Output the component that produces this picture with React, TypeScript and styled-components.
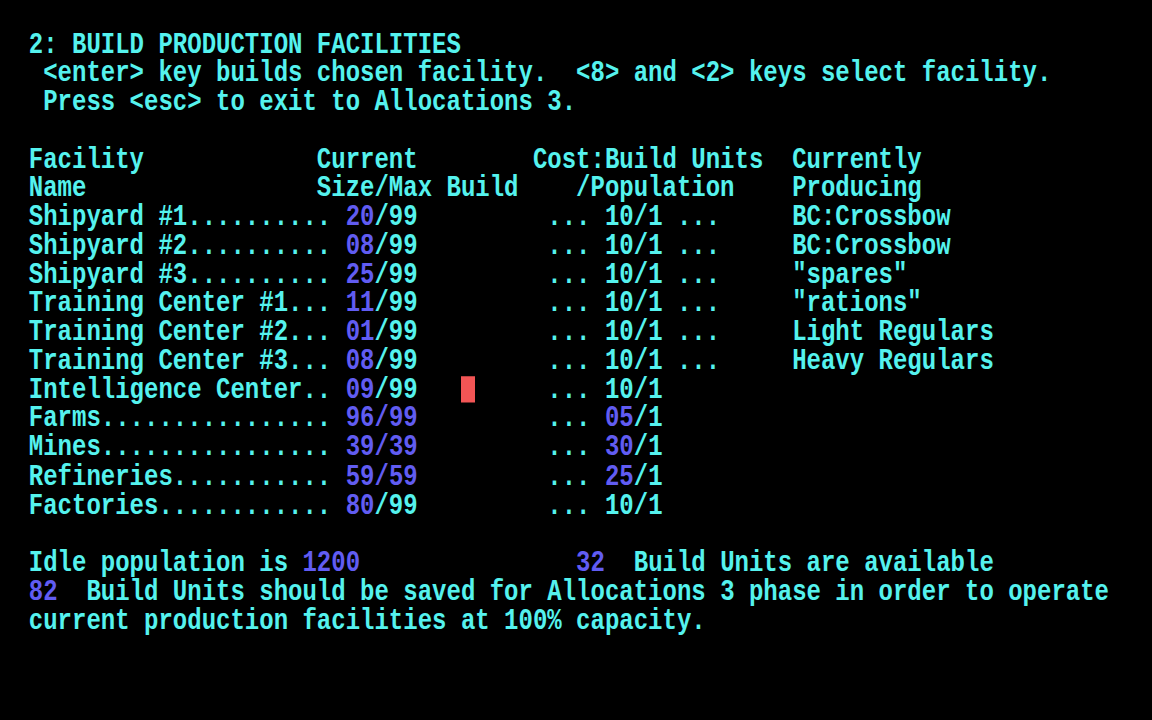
import React from 'react';
import styled, { createGlobalStyle } from 'styled-components';

// Text-mode palette
const CYAN = '#55f2ee';
const BLUE = '#615cf2';
const RED = '#f25555';

// 80x25 cells, 14.4 x 28.8 px each (drawn at 23.04px rows, then stretched 1.25x)
const COLS = 80;

const GlobalStyle = createGlobalStyle`
  html, body {
    margin: 0;
    background: #000;
  }
`;

const Frame = styled.div`
  width: 1152px;
  height: 720px;
  overflow: hidden;
  background: #000;
`;

const Screen = styled.div`
  width: 1152px;
  padding-top: 1px;
  transform: scaleY(1.25);
  transform-origin: top left;
  font-family: 'Liberation Mono', 'DejaVu Sans Mono', monospace;
  font-weight: bold;
  font-size: 24px;
  color: ${CYAN};
`;

const Row = styled.div`
  height: 23.04px;
  line-height: 23.04px;
  white-space: pre;
`;

const Hi = styled.span`
  color: ${BLUE};
`;

const Cursor = styled.span`
  display: inline-block;
  width: 14.4px;
  height: 20.8px;
  margin-top: 1px;
  vertical-align: top;
  background: ${RED};
`;

type Facility = {
  name: string;
  size: string;
  max: string;
  full?: boolean;
  cost: string;
  costHi?: boolean;
  producing?: string;
};

const facilities: Facility[] = [
  { name: 'Shipyard #1', size: '20', max: '99', cost: '10', producing: 'BC:Crossbow' },
  { name: 'Shipyard #2', size: '08', max: '99', cost: '10', producing: 'BC:Crossbow' },
  { name: 'Shipyard #3', size: '25', max: '99', cost: '10', producing: '"spares"' },
  { name: 'Training Center #1', size: '11', max: '99', cost: '10', producing: '"rations"' },
  { name: 'Training Center #2', size: '01', max: '99', cost: '10', producing: 'Light Regulars' },
  { name: 'Training Center #3', size: '08', max: '99', cost: '10', producing: 'Heavy Regulars' },
  { name: 'Intelligence Center', size: '09', max: '99', cost: '10' },
  { name: 'Farms', size: '96', max: '99', full: true, cost: '05', costHi: true },
  { name: 'Mines', size: '39', max: '39', full: true, cost: '30', costHi: true },
  { name: 'Refineries', size: '59', max: '59', full: true, cost: '25', costHi: true },
  { name: 'Factories', size: '80', max: '99', cost: '10' },
];

const CURSOR_ROW = 6;

// Lay out text pieces at fixed columns
const place = (parts: [number, string][]) =>
  parts.reduce((line, [col, text]) => line.padEnd(col, ' ') + text, '').padEnd(COLS, ' ');

const FacilityRow = ({ f, cursor }: { f: Facility; cursor: boolean }) => (
  <Row>
    {'  ' + f.name.padEnd(21, '.') + ' '}
    <Hi>{f.size}</Hi>
    {f.full ? <Hi>/{f.max}</Hi> : '/' + f.max}
    {cursor ? (
      <>
        {'   '}
        <Cursor />
        {'     '}
      </>
    ) : (
      '         '
    )}
    {'... '}
    {f.costHi ? (
      <>
        <Hi>{f.cost}</Hi>/1
      </>
    ) : (
      f.cost + '/1'
    )}
    {f.producing ? ' ...     ' + f.producing : ''}
  </Row>
);

const Blank = () => <Row> </Row>;

const App = () => (
  <>
    <GlobalStyle />
    <Frame>
      <Screen>
        <Blank />
        <Row>{'  2: BUILD PRODUCTION FACILITIES'}</Row>
        <Row>{'   <enter> key builds chosen facility.  <8> and <2> keys select facility.'}</Row>
        <Row>{'   Press <esc> to exit to Allocations 3.'}</Row>
        <Blank />
        <Row>{place([[2, 'Facility'], [22, 'Current'], [37, 'Cost:Build Units'], [55, 'Currently']])}</Row>
        <Row>{place([[2, 'Name'], [22, 'Size/Max Build'], [40, '/Population'], [55, 'Producing']])}</Row>
        {facilities.map((f, i) => (
          <FacilityRow key={f.name} f={f} cursor={i === CURSOR_ROW} />
        ))}
        <Blank />
        <Row>
          {'  Idle population is '}
          <Hi>1200</Hi>
          {'               '}
          <Hi>32</Hi>
          {'  Build Units are available'}
        </Row>
        <Row>
          {'  '}
          <Hi>82</Hi>
          {'  Build Units should be saved for Allocations 3 phase in order to operate'}
        </Row>
        <Row>{'  current production facilities at 100% capacity.'}</Row>
      </Screen>
    </Frame>
  </>
);

export default App;
